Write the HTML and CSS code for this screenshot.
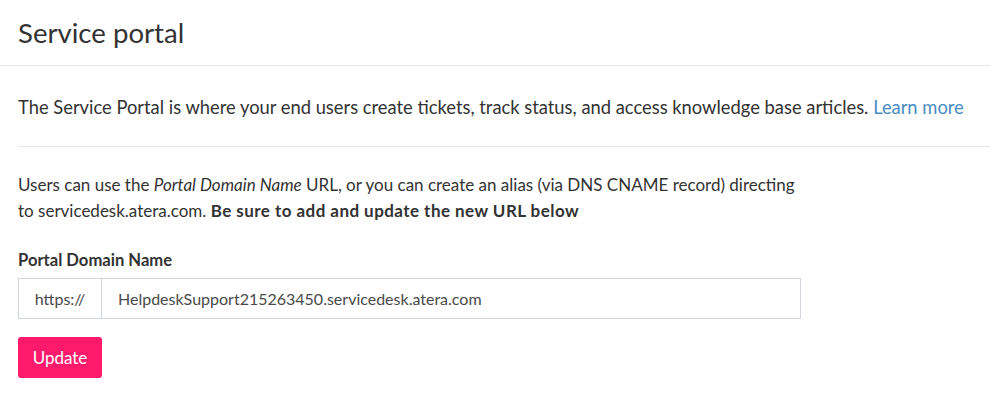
FILE: index.html
```html
<!DOCTYPE html>
<html lang="en">
<head>
    <meta charset="UTF-8">
    <title>Service portal</title>
    <link rel="stylesheet" href="styles.css">
</head>
<body>
    <div class="page-header">
        <h1>Service portal</h1>
    </div>

    <div class="content">
        <p class="intro">The Service Portal is where your end users create tickets, track status, and access knowledge base articles. <a href="#">Learn more</a></p>

        <p class="description">Users can use the <em>Portal Domain Name</em> URL, or you can create an alias (via DNS CNAME record) directing to servicedesk.atera.com. <strong>Be sure to add and update the new URL below</strong></p>

        <label class="field-label" for="domain">Portal Domain Name</label>
        <div class="input-group">
            <span class="input-prefix">https://</span>
            <input id="domain" class="input-field" type="text" value="HelpdeskSupport215263450.servicedesk.atera.com">
        </div>

        <button class="update-button">Update</button>
    </div>
</body>
</html>
```

FILE: styles.css
```css
body {
    margin: 0;
    padding: 0;
    font-family: Lato, "Noto Sans", sans-serif;
    color: #333;
    background: #fff;
}
.page-header {
    height: 65px;
    border-bottom: 1px solid #e6e6e6;
    padding: 0 18px;
    display: flex;
    align-items: center;
}
.page-header h1 {
    margin: 0;
    font-size: 27.6px;
    font-weight: 400;
    color: #333;
}
.content {
    padding-left: 18px;
}
.intro {
    margin: 0;
    padding: 28px 0 26px;
    font-size: 18.35px;
    line-height: 26px;
    border-bottom: 1px solid #e6e6e6;
}
.intro a {
    color: #4a8cc4;
    text-decoration: none;
}
.description {
    margin: 25px 0 0;
    max-width: 785px;
    font-size: 17px;
    line-height: 26px;
}
.description strong {
    letter-spacing: 0.45px;
}
.field-label {
    display: block;
    margin-top: 26px;
    font-size: 16.6px;
    font-weight: bold;
}
.input-group {
    display: flex;
    width: 783px;
    height: 41px;
    margin-top: 8px;
    border: 1px solid #d0d5e0;
    box-sizing: border-box;
}
.input-prefix {
    width: 82px;
    display: flex;
    align-items: center;
    justify-content: center;
    border-right: 1px solid #d0d5e0;
    font-size: 16px;
    color: #4a4a4a;
}
.input-field {
    flex: 1;
    border: none;
    outline: none;
    padding: 0 16px;
    font-family: inherit;
    font-size: 16px;
    color: #4a4a4a;
}
.update-button {
    display: block;
    margin-top: 18px;
    width: 84px;
    height: 41px;
    border: none;
    border-radius: 3px;
    background-color: #ff1a6c;
    color: white;
    font-family: inherit;
    font-size: 17px;
    cursor: pointer;
}
```
